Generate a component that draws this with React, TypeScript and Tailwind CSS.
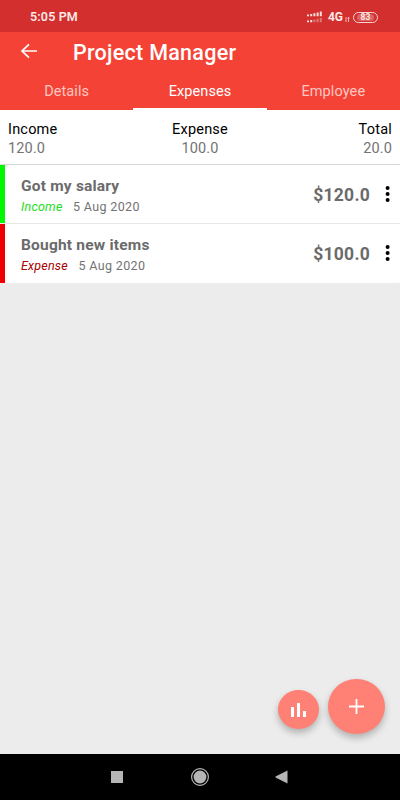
import { clsx } from "clsx";

const TABS = ["Details", "Expenses", "Employee"];

const SUMMARY = [
  { label: "Income", value: "120.0", align: "text-left" },
  { label: "Expense", value: "100.0", align: "text-center" },
  { label: "Total", value: "20.0", align: "text-right" },
];

const ENTRIES = [
  { title: "Got my salary", type: "Income", date: "5 Aug 2020", amount: "$120.0" },
  { title: "Bought new items", type: "Expense", date: "5 Aug 2020", amount: "$100.0" },
];

function SignalIcon() {
  return (
    <svg width="16" height="12" viewBox="0 0 16 12" fill="#fff">
      <path d="M0 3.6h2v1.6H0zM3.2 3h2v2.2h-2zM6.4 2.3h2v2.9h-2zM9.6 1.5h2v3.7h-2zM12.8.6h2v4.6h-2z" opacity=".85" />
      <path d="M0 9.6h2v1.6H0zM3.2 9h2v2.2h-2z" opacity=".85" />
      <path d="M6.4 8.6h2v2.6h-2zM9.6 7.8h2v3.4h-2zM12.8 7h2v4.2h-2z" opacity=".35" />
    </svg>
  );
}

function StatusBar() {
  return (
    <div className="flex h-8 items-center justify-between bg-[#d32f2f] pl-[30px] pr-[22px] pt-0.5 text-[#fbe9e7]">
      <span className="text-[12.5px] font-semibold tracking-[0.15px]">5:05 PM</span>
      <div className="flex items-center">
        <SignalIcon />
        <span className="ml-[5px] text-xs font-bold">4G</span>
        <svg className="ml-0.5 mt-1" width="5" height="5" viewBox="0 0 5 5" stroke="#f3b6b4" fill="none">
          <path d="M1 0v5M3.5 5V0M2.6 1.2h2" />
        </svg>
        <span className="ml-[3px] flex h-[11px] w-[25px] items-center justify-center rounded-full border border-[#f6d5d3] p-px">
          <span className="flex h-full w-[17px] items-center justify-center rounded-sm bg-white/25 text-[8.5px] font-bold leading-none">
            83
          </span>
        </span>
      </div>
    </div>
  );
}

function Header() {
  return (
    <header className="bg-[#f44336] text-white">
      <div className="flex h-[38px] items-center pl-5">
        <button type="button" aria-label="Back">
          <svg width="18" height="16" viewBox="0 0 18 16" fill="none" stroke="#fff" strokeWidth="1.7">
            <path d="M9 1.3 2 8l7 6.7M2 8h15" />
          </svg>
        </button>
        <h1 className="ml-[35px] pt-[3px] text-[21.5px] font-medium leading-6 tracking-[0.28px]">Project Manager</h1>
      </div>
      <nav className="grid h-10 grid-cols-3">
        {TABS.map((tab) => (
          <button
            key={tab}
            type="button"
            className={clsx(
              "border-b-2 pt-1.5 text-[14.5px] tracking-[0.1px]",
              tab === "Expenses" ? "border-white text-white" : "border-transparent text-[#fcc6c2]"
            )}
          >
            {tab}
          </button>
        ))}
      </nav>
    </header>
  );
}

function Summary() {
  return (
    <div className="grid h-[54px] grid-cols-3 bg-white px-2 pt-[9.5px]">
      {SUMMARY.map((item) => (
        <div key={item.label} className={item.align}>
          <p className="text-[14.5px] leading-[19px] tracking-[0.2px] text-black">{item.label}</p>
          <p className="text-[14.5px] leading-[19px] tracking-[0.15px] text-[#737373]">{item.value}</p>
        </div>
      ))}
    </div>
  );
}

function EntryRow({ entry }: { entry: (typeof ENTRIES)[number] }) {
  const income = entry.type === "Income";

  return (
    <li
      className={clsx(
        "flex h-[59px] items-center rounded-r-[1px] border-l-[5px] bg-white pl-4 pr-2",
        income ? "border-l-[#00f800]" : "border-l-[#f00000]"
      )}
    >
      <div className="flex-1 pt-[3px]">
        <p className="text-[15.5px] font-bold leading-5 tracking-[0.2px] text-[#6b6b6b]">{entry.title}</p>
        <p className="mt-px flex gap-[10.5px] text-[12.5px] leading-5">
          <span className={clsx("italic tracking-[0.2px]", income ? "text-[#22dd22]" : "text-[#a80000]")}>
            {entry.type}
          </span>
          <span className="tracking-[0.35px] text-[#737373]">{entry.date}</span>
        </p>
      </div>
      <span className="pt-px text-[17.5px] font-bold tracking-[0.25px] text-[#6b6b6b]">{entry.amount}</span>
      <button type="button" aria-label="More" className="mb-0.5 ml-[14px]">
        <svg width="8" height="18" viewBox="0 0 8 18">
          <circle cx="3.6" cy="3" r="2" />
          <circle cx="3.6" cy="9" r="2" />
          <circle cx="3.6" cy="15" r="2" />
        </svg>
      </button>
    </li>
  );
}

function NavBar() {
  return (
    <div className="flex h-[46px] items-center bg-black pl-[111px]">
      <span className="h-3 w-3 bg-[#b5b5b5]" />
      <svg className="ml-[68px]" width="18" height="18" viewBox="0 0 18 18">
        <circle cx="9" cy="9" r="8.4" fill="none" stroke="#b5b5b5" strokeWidth="1.2" />
        <circle cx="9" cy="9" r="6.4" fill="#b5b5b5" />
      </svg>
      <svg className="ml-[66px]" width="13" height="14" viewBox="0 0 13 14" fill="#b5b5b5">
        <path d="M12.5.5v13L.5 7.6V6.4z" />
      </svg>
    </div>
  );
}

export default function App() {
  return (
    <div className="flex h-[800px] w-[400px] flex-col overflow-hidden bg-[#ececec] font-[Roboto,sans-serif]">
      <StatusBar />
      <Header />
      <Summary />
      <ul className="border-t border-[#d8d8d8]">
        {ENTRIES.map((entry, index) => (
          <div key={entry.title} className={clsx(index > 0 && "-mt-px border-t border-[#e8e8e8]")}>
            <EntryRow entry={entry} />
          </div>
        ))}
      </ul>

      <div className="mt-auto flex items-end justify-end gap-[9px] pb-[20px] pr-[15px]">
        <button
          type="button"
          aria-label="Report"
          className="mb-[5px] flex h-[39px] w-[41px] items-center justify-center rounded-[50%] bg-[#ff8074] shadow-[0_4px_7px_rgba(0,0,0,0.25)]"
        >
          <svg width="15" height="14" viewBox="0 0 15 14" fill="#fff">
            <path d="M0 4h3v10H0zM6 0h3v14H6zM12 8h3v6h-3z" />
          </svg>
        </button>
        <button
          type="button"
          aria-label="Add"
          className="flex h-[55px] w-[57px] items-center justify-center rounded-[50%] bg-[#ff8074] shadow-[0_4px_7px_rgba(0,0,0,0.25)]"
        >
          <svg width="15" height="15" viewBox="0 0 15 15" stroke="#fff" strokeWidth="1.8">
            <path d="M7.5 0v15M0 7.5h15" />
          </svg>
        </button>
      </div>
      <NavBar />
    </div>
  );
}
